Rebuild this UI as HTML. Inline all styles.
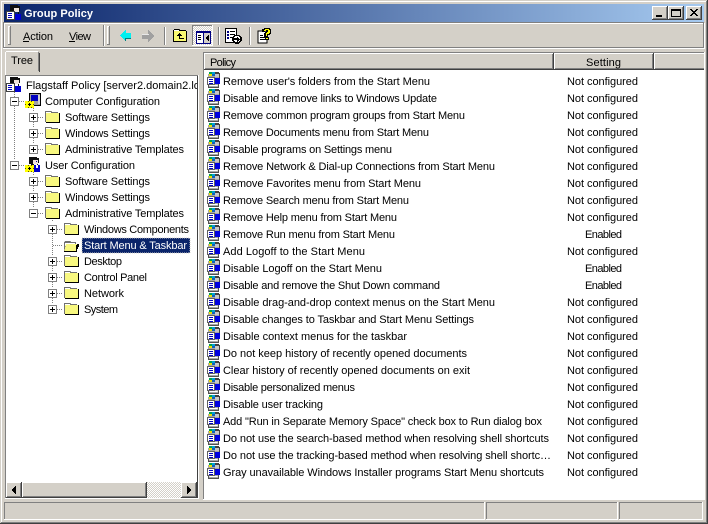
<!DOCTYPE html>
<html><head><meta charset="utf-8"><title>Group Policy</title>
<style>
html,body{margin:0;padding:0;width:708px;height:524px;overflow:hidden;background:#d4d0c8}
svg{display:block;position:absolute;left:0;top:0}
text{font-family:"Liberation Sans",Arial,sans-serif;font-size:11px;fill:#000;white-space:pre}
</style></head><body>
<svg width="708" height="524" viewBox="0 0 708 524" shape-rendering="crispEdges" xmlns="http://www.w3.org/2000/svg">
<defs>
<linearGradient id="tb" x1="0" x2="1" y1="0" y2="0"><stop offset="0" stop-color="#0a246a"/><stop offset="1" stop-color="#a6caf0"/></linearGradient>
<pattern id="dw" width="2" height="2" patternUnits="userSpaceOnUse"><rect width="2" height="2" fill="#d4d0c8"/><rect width="1" height="1" fill="#fff"/><rect x="1" y="1" width="1" height="1" fill="#fff"/></pattern>

<g id="pol">
<rect x="2" y="2" width="11" height="14" fill="#a8a8a8"/>
<path d="M3 3h9v1h-9zM3 13h9v1h-9z" fill="#e8e8e8"/>
<path d="M2 12h1v4h-1zM12 11h1v5h-1zM2 15h11v1H2z" fill="#505050"/>
<path d="M9 0h4v1h1v5h-1V2H9z" fill="#404040"/>
<rect x="9" y="2" width="4" height="3" fill="#c8c8c8"/>
<rect x="3" y="0" width="3" height="2" fill="#00a050"/><rect x="6" y="0" width="3" height="2" fill="#00a0d0"/><rect x="3" y="2" width="3" height="2" fill="#f0e000"/><rect x="6" y="2" width="3" height="2" fill="#1060c0"/>
<rect x="1" y="5" width="8" height="8" fill="#606060"/>
<rect x="2" y="6" width="6" height="6" fill="#fff"/>
<rect x="3" y="7" width="4" height="1" fill="#0000c0"/><rect x="3" y="9" width="4" height="1" fill="#0000c0"/><rect x="3" y="11" width="4" height="1" fill="#0000c0"/>
<rect x="9" y="6" width="5" height="6" fill="#0000e0"/>
<rect x="4" y="13" width="7" height="1" fill="#fff"/>
</g>

<g id="fold">
<path d="M1 1h6l1 1h6v1h1v9h-14z" fill="#707070"/>
<rect x="2" y="3" width="13" height="9" fill="#f8f880"/>
<rect x="2" y="2" width="5" height="1" fill="#fff"/>
<rect x="15" y="3" width="1" height="10" fill="#000"/><rect x="2" y="12" width="14" height="1" fill="#000"/>
</g>

<g id="fopen">
<path d="M2 3h5l1 1h5v2h2l-2 8H1V4z" fill="#707070"/>
<rect x="2" y="5" width="10" height="3" fill="#fff"/>
<path d="M3 6h12v1l-2 7H1z" fill="#f8f880"/>
<rect x="1" y="13" width="13" height="1" fill="#000"/>
<rect x="13" y="7" width="1" height="6" fill="#000"/><rect x="14" y="6" width="1" height="5" fill="#000"/><rect x="15" y="6" width="1" height="3" fill="#000"/>
</g>

<g id="plus"><rect x=".5" y=".5" width="8" height="8" fill="#fff" stroke="#808080"/><rect x="2" y="4" width="5" height="1" fill="#000"/><rect x="4" y="2" width="1" height="5" fill="#000"/></g>
<g id="minus"><rect x=".5" y=".5" width="8" height="8" fill="#fff" stroke="#808080"/><rect x="2" y="4" width="5" height="1" fill="#000"/></g>

<g id="gear">
<path d="M1 8h2v1h1V8h2v1h1V8h2v3H8v1h1v3H7v-1H6v1H4v-1H3v1H0v-3h1v-1H0V8z" fill="#ffff00"/>
<path d="M0 11h1v1H0zM8 11h1v1H8zM3 14h1v1H3zM6 14h1v1H6zM3 8h1v1H3zM6 8h1v1H6z" fill="#605800"/>
<rect x="3" y="11" width="3" height="1" fill="#000"/><rect x="4" y="10" width="1" height="3" fill="#000"/>
</g>

<g id="user">
<path d="M4 0h8v1h2v5h-1v3h-1V6H9v3H6V7H4V1z" fill="#101010"/>
<rect x="8" y="2" width="5" height="5" fill="#f0e4dc"/>
<rect x="8" y="2" width="5" height="1" fill="#101010"/>
<rect x="11" y="4" width="1" height="1" fill="#0000a0"/>
<rect x="9" y="8" width="6" height="7" fill="#0000d0"/>
<rect x="11" y="8" width="2" height="3" fill="#fff"/>
<use href="#gear" y="0"/>
</g>
</defs>

<!-- window frame -->
<rect width="708" height="524" fill="#d4d0c8"/>
<rect x="1" y="1" width="706" height="1" fill="#fff"/><rect x="1" y="1" width="1" height="521" fill="#fff"/>
<rect x="0" y="523" width="708" height="1" fill="#404040"/><rect x="707" y="0" width="1" height="524" fill="#404040"/>
<rect x="1" y="522" width="706" height="1" fill="#808080"/><rect x="706" y="1" width="1" height="522" fill="#808080"/>

<!-- title bar -->
<rect x="4" y="4" width="700" height="18" fill="url(#tb)"/>
<g transform="translate(6,5)">
<path d="M4 0h8v1h2v5h-1v3h-1V6H9v3H6V7H4V1z" fill="#101010"/>
<rect x="8" y="2" width="5" height="5" fill="#f0e4dc"/>
<rect x="8" y="2" width="5" height="1" fill="#101010"/>
<rect x="0" y="6" width="9" height="9" fill="#404040"/>
<rect x="1" y="7" width="7" height="7" fill="#fff"/>
<rect x="2" y="8" width="4" height="1" fill="#0000c0"/><rect x="2" y="10" width="4" height="1" fill="#0000c0"/><rect x="2" y="12" width="4" height="1" fill="#0000c0"/>
<rect x="9" y="9" width="6" height="6" fill="#0000d0"/>
</g>
<text x="24" y="17" textLength="69" style="font-weight:bold;fill:#fff">Group Policy</text>

<!-- window buttons -->
<g>
<rect x="652" y="6" width="16" height="14" fill="#404040"/><rect x="652" y="6" width="15" height="13" fill="#fff"/><rect x="653" y="7" width="14" height="12" fill="#808080"/><rect x="653" y="7" width="13" height="11" fill="#d4d0c8"/>
<rect x="656" y="15" width="6" height="2" fill="#000"/>
<rect x="668" y="6" width="16" height="14" fill="#404040"/><rect x="668" y="6" width="15" height="13" fill="#fff"/><rect x="669" y="7" width="14" height="12" fill="#808080"/><rect x="669" y="7" width="13" height="11" fill="#d4d0c8"/>
<rect x="671.5" y="9.5" width="9" height="7" fill="none" stroke="#000"/><rect x="671" y="9" width="10" height="2" fill="#000"/>
<rect x="686" y="6" width="16" height="14" fill="#404040"/><rect x="686" y="6" width="15" height="13" fill="#fff"/><rect x="687" y="7" width="14" height="12" fill="#808080"/><rect x="687" y="7" width="13" height="11" fill="#d4d0c8"/>
<path d="M690 9h2v1h1v1h2v-1h1V9h2v1h-1v1h-1v1h-1v1h1v1h1v1h1v1h-2v-1h-1v-1h-2v1h-1v1h-2v-1h1v-1h1v-1h1v-1h-1v-1h-1v-1h-1z" fill="#000"/>
</g>

<!-- toolbar band -->
<rect x="4" y="22" width="700" height="1" fill="#808080"/><rect x="4" y="23" width="700" height="1" fill="#fff"/>
<rect x="4" y="23" width="1" height="24" fill="#fff"/><rect x="703" y="23" width="1" height="24" fill="#808080"/><rect x="704" y="23" width="1" height="25" fill="#fff"/>
<rect x="3" y="22" width="1" height="26" fill="#808080"/>
<rect x="4" y="47" width="700" height="1" fill="#808080"/><rect x="3" y="48" width="702" height="1" fill="#fff"/>
<!-- grips -->
<rect x="8" y="26" width="1" height="19" fill="#fff"/><rect x="8" y="26" width="3" height="1" fill="#fff"/><rect x="10" y="26" width="1" height="19" fill="#808080"/><rect x="8" y="44" width="3" height="1" fill="#808080"/>
<rect x="103" y="25" width="1" height="21" fill="#808080"/><rect x="104" y="25" width="1" height="21" fill="#fff"/>
<rect x="107" y="26" width="1" height="19" fill="#fff"/><rect x="107" y="26" width="3" height="1" fill="#fff"/><rect x="109" y="26" width="1" height="19" fill="#808080"/><rect x="107" y="44" width="3" height="1" fill="#808080"/>
<text x="23" y="40" textLength="30">Action</text><rect x="23" y="41" width="6" height="1" fill="#000"/>
<text x="69" y="40" textLength="22">View</text><rect x="69" y="41" width="6" height="1" fill="#000"/>

<!-- back arrow -->
<path d="M125 30h1v3h5v5h-5v3h-1v-1h-1v-1h-1v-1h-1v-1h-1v-1h-1v-1h1v-1h1v-1h1v-1h1v-1h1z" fill="#00f0f0"/>
<path d="M126 38h5v1h-5zM125 41h1v-3h-1z" fill="#008080"/>
<!-- forward arrow -->
<path d="M148 30h1v1h1v1h1v1h1v1h1v1h1v2h-1v1h-1v1h-1v1h-1v1h-1v1h-1v-3h-6v-5h6z" fill="#a0a0a0"/>
<rect x="142" y="34" width="7" height="1" fill="#e8e8e8"/>

<rect x="164" y="27" width="1" height="18" fill="#808080"/><rect x="165" y="27" width="1" height="18" fill="#fff"/>

<!-- up folder -->
<g transform="translate(172,28)">
<path d="M2 1h5l1 1h6v1h1v11H1V2h1z" fill="#000"/>
<rect x="2" y="3" width="12" height="10" fill="#f8f870"/>
<rect x="2" y="2" width="5" height="1" fill="#fff"/>
<path d="M7 5h1v1h1v1h1v1H8v2h4v1H7V8H5V7h1V6h1z" fill="#000"/>
</g>
<!-- pressed button -->
<rect x="192" y="25" width="21" height="21" fill="url(#dw)"/>
<rect x="192" y="25" width="21" height="1" fill="#808080"/><rect x="192" y="25" width="1" height="21" fill="#808080"/>
<rect x="192" y="45" width="21" height="1" fill="#fff"/><rect x="212" y="25" width="1" height="21" fill="#fff"/>
<g transform="translate(196,31)">
<rect x="0" y="0" width="15" height="13" fill="#000080"/>
<rect x="1" y="2" width="6" height="10" fill="#fff"/>
<rect x="8" y="2" width="6" height="10" fill="#d4d0c8"/>
<rect x="2" y="4" width="3" height="1" fill="#000"/><rect x="2" y="6" width="3" height="1" fill="#000"/><rect x="2" y="8" width="3" height="1" fill="#000"/>
<path d="M12 4h1v6h-1V9h-1V8h-1V6h1V5h1z" fill="#000"/>
</g>

<rect x="218" y="27" width="1" height="18" fill="#808080"/><rect x="219" y="27" width="1" height="18" fill="#fff"/>

<!-- export list -->
<g transform="translate(225,28)">
<rect x=".5" y=".5" width="11" height="14" fill="#fff" stroke="#000"/>
<rect x="2" y="3" width="2" height="2" fill="#000080"/><rect x="5" y="3" width="5" height="1" fill="#000"/>
<rect x="2" y="6" width="2" height="2" fill="#000080"/><rect x="5" y="6" width="5" height="1" fill="#000"/>
<rect x="2" y="9" width="2" height="2" fill="#000080"/><rect x="5" y="9" width="3" height="1" fill="#000"/>
<path d="M10 7h4l1 1h1v1h1v4h-1v1h-1v1h-1v1h-4v-1H9v-1H8v-1H7V9h1V8h1V7z" fill="#000"/>
<path d="M10 8h4v1h1v4h-1v1h-4v-1H9V9h1z" fill="#fff"/>
<path d="M12 9h1v1h1v1h1v1h-1v1h-1v1h-1v-2H9v-2h3z" fill="#000"/>
</g>

<rect x="249" y="27" width="1" height="18" fill="#808080"/><rect x="250" y="27" width="1" height="18" fill="#fff"/>

<!-- help -->
<g transform="translate(257,28)">
<path d="M1 3h8v1h1v11H1z" fill="#fff" stroke="#000" stroke-width="1"/>
<rect x="3" y="7" width="3" height="1" fill="#000"/><rect x="3" y="9" width="5" height="1" fill="#000"/><rect x="3" y="11" width="5" height="1" fill="#000"/>
<path d="M7 0h6v1h1v5h-1v1h-2v2h1v3H8V9h-1V5h1V4h1V2h-1v2H5V1h2z" fill="#000"/>
<path d="M8 1h4v1h1v3h-1v1h-2v2H9V5h1V4h1V2H9v1H7V2h1z" fill="#ffff00"/>
<rect x="9" y="10" width="2" height="1" fill="#ffff00"/>
</g>

<!-- Tab -->
<rect x="5" y="52" width="1" height="23" fill="#fff"/><rect x="6" y="51" width="32" height="1" fill="#fff"/>
<rect x="38" y="52" width="1" height="19" fill="#808080"/><rect x="39" y="53" width="1" height="19" fill="#404040"/>
<text x="11" y="64" textLength="22">Tree</text>

<!-- Tree pane -->
<rect x="5" y="75" width="193" height="423" fill="#808080"/>
<rect x="6" y="76" width="192" height="422" fill="#404040"/>
<rect x="6" y="76" width="191" height="421" fill="#fff"/>
<rect x="5" y="498" width="194" height="1" fill="#fff"/><rect x="198" y="75" width="1" height="424" fill="#fff"/>

<!-- Tree lines -->
<g fill="#808080">
<path d="M14 92h1v1h-1zM14 94h1v1h-1zM14 96h1v1h-1zM14 106h1v1h-1zM14 108h1v1h-1zM14 110h1v1h-1zM14 112h1v1h-1zM14 114h1v1h-1zM14 116h1v1h-1zM14 118h1v1h-1zM14 120h1v1h-1zM14 122h1v1h-1zM14 124h1v1h-1zM14 126h1v1h-1zM14 128h1v1h-1zM14 130h1v1h-1zM14 132h1v1h-1zM14 134h1v1h-1zM14 136h1v1h-1zM14 138h1v1h-1zM14 140h1v1h-1zM14 142h1v1h-1zM14 144h1v1h-1zM14 146h1v1h-1zM14 148h1v1h-1zM14 150h1v1h-1zM14 152h1v1h-1zM14 154h1v1h-1zM14 156h1v1h-1zM14 158h1v1h-1z"/>
<path d="M33 108h1v1h-1zM33 110h1v1h-1zM33 122h1v1h-1zM33 124h1v1h-1zM33 126h1v1h-1zM33 138h1v1h-1zM33 140h1v1h-1zM33 142h1v1h-1zM33 172h1v1h-1zM33 174h1v1h-1zM33 186h1v1h-1zM33 188h1v1h-1zM33 190h1v1h-1zM33 202h1v1h-1zM33 204h1v1h-1zM33 206h1v1h-1z"/>
<path d="M52 218h1v1h-1zM52 220h1v1h-1zM52 234h1v1h-1zM52 236h1v1h-1zM52 238h1v1h-1zM52 240h1v1h-1zM52 242h1v1h-1zM52 244h1v1h-1zM52 246h1v1h-1zM52 248h1v1h-1zM52 250h1v1h-1zM52 252h1v1h-1zM52 254h1v1h-1zM52 266h1v1h-1zM52 268h1v1h-1zM52 270h1v1h-1zM52 282h1v1h-1zM52 284h1v1h-1zM52 286h1v1h-1zM52 298h1v1h-1zM52 300h1v1h-1zM52 302h1v1h-1z"/>
<path d="M19 101h1v1h-1zM21 101h1v1h-1zM23 101h1v1h-1zM19 165h1v1h-1zM21 165h1v1h-1zM23 165h1v1h-1z"/>
<path d="M38 117h1v1h-1zM40 117h1v1h-1zM42 117h1v1h-1zM38 133h1v1h-1zM40 133h1v1h-1zM42 133h1v1h-1zM38 149h1v1h-1zM40 149h1v1h-1zM42 149h1v1h-1zM38 181h1v1h-1zM40 181h1v1h-1zM42 181h1v1h-1zM38 197h1v1h-1zM40 197h1v1h-1zM42 197h1v1h-1zM38 213h1v1h-1zM40 213h1v1h-1zM42 213h1v1h-1z"/>
<path d="M57 229h1v1h-1zM59 229h1v1h-1zM61 229h1v1h-1zM53 245h1v1h-1zM55 245h1v1h-1zM57 245h1v1h-1zM59 245h1v1h-1zM61 245h1v1h-1zM57 261h1v1h-1zM59 261h1v1h-1zM61 261h1v1h-1zM57 277h1v1h-1zM59 277h1v1h-1zM61 277h1v1h-1zM57 293h1v1h-1zM59 293h1v1h-1zM61 293h1v1h-1zM57 309h1v1h-1zM59 309h1v1h-1zM61 309h1v1h-1z"/>
</g>

<!-- Tree root -->
<g transform="translate(6,77)">
<path d="M4 0h8v1h2v5h-1v3h-1V6H9v3H6V7H4V1z" fill="#101010"/>
<rect x="8" y="2" width="5" height="5" fill="#f0e4dc"/>
<rect x="8" y="2" width="5" height="1" fill="#101010"/>
<rect x="0" y="6" width="9" height="9" fill="#404040"/>
<rect x="1" y="7" width="7" height="7" fill="#fff"/>
<rect x="2" y="8" width="4" height="1" fill="#0000c0"/><rect x="2" y="10" width="4" height="1" fill="#0000c0"/><rect x="2" y="12" width="4" height="1" fill="#0000c0"/>
<rect x="9" y="9" width="6" height="6" fill="#0000d0"/>
</g>
<svg x="0" y="76" width="197" height="20" overflow="hidden"><text x="26" y="13" textLength="191">Flagstaff Policy [server2.domain2.local]</text></svg>

<use href="#minus" x="10" y="97"/>
<g transform="translate(25,93)">
<rect x="4" y="0" width="12" height="13" fill="#000"/>
<rect x="5" y="1" width="10" height="11" fill="#a0a0a0"/>
<rect x="6" y="2" width="7" height="6" fill="#0000c0"/>
<rect x="13" y="2" width="2" height="9" fill="#d0d0d0"/>
<use href="#gear" y="0"/>
</g>
<text x="45" y="105" textLength="115">Computer Configuration</text>

<use href="#plus" x="29" y="113"/><use href="#fold" x="44" y="110"/><text x="65" y="121" textLength="85">Software Settings</text>
<use href="#plus" x="29" y="129"/><use href="#fold" x="44" y="126"/><text x="65" y="137" textLength="85">Windows Settings</text>
<use href="#plus" x="29" y="145"/><use href="#fold" x="44" y="142"/><text x="65" y="153" textLength="119">Administrative Templates</text>

<use href="#minus" x="10" y="161"/><use href="#user" x="25" y="157"/>
<text x="45" y="169" textLength="90">User Configuration</text>

<use href="#plus" x="29" y="177"/><use href="#fold" x="44" y="174"/><text x="65" y="185" textLength="85">Software Settings</text>
<use href="#plus" x="29" y="193"/><use href="#fold" x="44" y="190"/><text x="65" y="201" textLength="85">Windows Settings</text>
<use href="#minus" x="29" y="209"/><use href="#fold" x="44" y="206"/><text x="65" y="217" textLength="119">Administrative Templates</text>

<use href="#plus" x="48" y="225"/><use href="#fold" x="63" y="222"/><text x="84" y="233" textLength="105">Windows Components</text>
<use href="#fopen" x="63" y="238"/>
<rect x="82" y="238" width="108" height="15" fill="#0a246a"/>
<rect x="82" y="238" width="108" height="15" fill="none" stroke="#d4d0c8" stroke-dasharray="1 1" stroke-width="1"/>
<text x="84" y="249" textLength="103" style="fill:#fff">Start Menu &amp; Taskbar</text>
<use href="#plus" x="48" y="257"/><use href="#fold" x="63" y="254"/><text x="84" y="265" textLength="38">Desktop</text>
<use href="#plus" x="48" y="273"/><use href="#fold" x="63" y="270"/><text x="84" y="281" textLength="63">Control Panel</text>
<use href="#plus" x="48" y="289"/><use href="#fold" x="63" y="286"/><text x="84" y="297" textLength="40">Network</text>
<use href="#plus" x="48" y="305"/><use href="#fold" x="63" y="302"/><text x="84" y="313" textLength="34">System</text>

<!-- Tree scrollbar -->
<rect x="6" y="482" width="191" height="16" fill="url(#dw)"/>
<g>
<rect x="6" y="482" width="16" height="16" fill="#404040"/><rect x="6" y="482" width="15" height="15" fill="#fff"/><rect x="7" y="483" width="14" height="14" fill="#808080"/><rect x="7" y="483" width="13" height="13" fill="#d4d0c8"/>
<path d="M15 486h1v8h-1v-1h-1v-1h-1v-1h-1v-2h1v-1h1v-1h1z" fill="#000"/>
<rect x="22" y="482" width="125" height="16" fill="#404040"/><rect x="22" y="482" width="124" height="15" fill="#fff"/><rect x="23" y="483" width="123" height="14" fill="#808080"/><rect x="23" y="483" width="122" height="13" fill="#d4d0c8"/>
<rect x="181" y="482" width="16" height="16" fill="#404040"/><rect x="181" y="482" width="15" height="15" fill="#fff"/><rect x="182" y="483" width="14" height="14" fill="#808080"/><rect x="182" y="483" width="13" height="13" fill="#d4d0c8"/>
<path d="M187 486h1v1h1v1h1v1h1v2h-1v1h-1v1h-1v1h-1z" fill="#000"/>
</g>

<!-- List pane -->
<rect x="203" y="52" width="502" height="448" fill="#808080"/>
<rect x="204" y="53" width="500" height="446" fill="#fff"/>
<rect x="203" y="499" width="502" height="1" fill="#fff"/><rect x="704" y="52" width="1" height="448" fill="#fff"/>
<!-- Header -->
<rect x="204" y="53" width="500" height="16" fill="#d4d0c8"/>
<rect x="204" y="53" width="500" height="1" fill="#fff"/>
<rect x="204" y="68" width="500" height="1" fill="#808080"/><rect x="204" y="69" width="500" height="1" fill="#404040"/>
<rect x="204" y="53" width="1" height="16" fill="#fff"/>
<rect x="552" y="54" width="1" height="15" fill="#808080"/><rect x="553" y="53" width="1" height="17" fill="#404040"/><rect x="554" y="53" width="1" height="16" fill="#fff"/>
<rect x="652" y="54" width="1" height="15" fill="#808080"/><rect x="653" y="53" width="1" height="17" fill="#404040"/><rect x="654" y="53" width="1" height="16" fill="#fff"/>
<text x="210" y="66" textLength="26">Policy</text>
<text x="586" y="66" textLength="35">Setting</text>

<!-- Rows -->
<use href="#pol" x="206" y="72"/><text x="223" y="85" textLength="207">Remove user's folders from the Start Menu</text><text x="567" y="85" textLength="71">Not configured</text>
<use href="#pol" x="206" y="89"/><text x="223" y="102" textLength="214">Disable and remove links to Windows Update</text><text x="567" y="102" textLength="71">Not configured</text>
<use href="#pol" x="206" y="106"/><text x="223" y="119" textLength="242">Remove common program groups from Start Menu</text><text x="567" y="119" textLength="71">Not configured</text>
<use href="#pol" x="206" y="123"/><text x="223" y="136" textLength="206">Remove Documents menu from Start Menu</text><text x="567" y="136" textLength="71">Not configured</text>
<use href="#pol" x="206" y="140"/><text x="223" y="153" textLength="169">Disable programs on Settings menu</text><text x="567" y="153" textLength="71">Not configured</text>
<use href="#pol" x="206" y="157"/><text x="223" y="170" textLength="272">Remove Network &amp; Dial-up Connections from Start Menu</text><text x="567" y="170" textLength="71">Not configured</text>
<use href="#pol" x="206" y="174"/><text x="223" y="187" textLength="198">Remove Favorites menu from Start Menu</text><text x="567" y="187" textLength="71">Not configured</text>
<use href="#pol" x="206" y="191"/><text x="223" y="204" textLength="186">Remove Search menu from Start Menu</text><text x="567" y="204" textLength="71">Not configured</text>
<use href="#pol" x="206" y="208"/><text x="223" y="221" textLength="174">Remove Help menu from Start Menu</text><text x="567" y="221" textLength="71">Not configured</text>
<use href="#pol" x="206" y="225"/><text x="223" y="238" textLength="172">Remove Run menu from Start Menu</text><text x="585" y="238" textLength="37">Enabled</text>
<use href="#pol" x="206" y="242"/><text x="223" y="255" textLength="142">Add Logoff to the Start Menu</text><text x="567" y="255" textLength="71">Not configured</text>
<use href="#pol" x="206" y="259"/><text x="223" y="272" textLength="159">Disable Logoff on the Start Menu</text><text x="585" y="272" textLength="37">Enabled</text>
<use href="#pol" x="206" y="276"/><text x="223" y="289" textLength="217">Disable and remove the Shut Down command</text><text x="585" y="289" textLength="37">Enabled</text>
<use href="#pol" x="206" y="293"/><text x="223" y="306" textLength="272">Disable drag-and-drop context menus on the Start Menu</text><text x="567" y="306" textLength="71">Not configured</text>
<use href="#pol" x="206" y="310"/><text x="223" y="323" textLength="251">Disable changes to Taskbar and Start Menu Settings</text><text x="567" y="323" textLength="71">Not configured</text>
<use href="#pol" x="206" y="327"/><text x="223" y="340" textLength="184">Disable context menus for the taskbar</text><text x="567" y="340" textLength="71">Not configured</text>
<use href="#pol" x="206" y="344"/><text x="223" y="357" textLength="244">Do not keep history of recently opened documents</text><text x="567" y="357" textLength="71">Not configured</text>
<use href="#pol" x="206" y="361"/><text x="223" y="374" textLength="247">Clear history of recently opened documents on exit</text><text x="567" y="374" textLength="71">Not configured</text>
<use href="#pol" x="206" y="378"/><text x="223" y="391" textLength="132">Disable personalized menus</text><text x="567" y="391" textLength="71">Not configured</text>
<use href="#pol" x="206" y="395"/><text x="223" y="408" textLength="100">Disable user tracking</text><text x="567" y="408" textLength="71">Not configured</text>
<use href="#pol" x="206" y="412"/><text x="223" y="425" textLength="319">Add "Run in Separate Memory Space" check box to Run dialog box</text><text x="567" y="425" textLength="71">Not configured</text>
<use href="#pol" x="206" y="429"/><text x="223" y="442" textLength="326">Do not use the search-based method when resolving shell shortcuts</text><text x="567" y="442" textLength="71">Not configured</text>
<use href="#pol" x="206" y="446"/><text x="223" y="459" textLength="328">Do not use the tracking-based method when resolving shell shortc…</text><text x="567" y="459" textLength="71">Not configured</text>
<use href="#pol" x="206" y="463"/><text x="223" y="476" textLength="321">Gray unavailable Windows Installer programs Start Menu shortcuts</text><text x="567" y="476" textLength="71">Not configured</text>

<!-- Status bar -->
<rect x="4" y="502" width="480" height="1" fill="#808080"/><rect x="4" y="502" width="1" height="17" fill="#808080"/><rect x="4" y="519" width="481" height="1" fill="#fff"/><rect x="484" y="502" width="1" height="18" fill="#fff"/>
<rect x="486" y="502" width="131" height="1" fill="#808080"/><rect x="486" y="502" width="1" height="17" fill="#808080"/><rect x="486" y="519" width="132" height="1" fill="#fff"/><rect x="617" y="502" width="1" height="18" fill="#fff"/>
<rect x="619" y="502" width="83" height="1" fill="#808080"/><rect x="619" y="502" width="1" height="17" fill="#808080"/><rect x="619" y="519" width="84" height="1" fill="#fff"/><rect x="702" y="502" width="1" height="18" fill="#fff"/>
</svg>
</body></html>
